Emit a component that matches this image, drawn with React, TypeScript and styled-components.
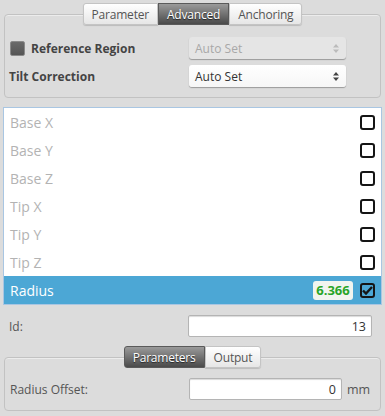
import React from "react";
import styled, { createGlobalStyle, css } from "styled-components";

const Global = createGlobalStyle`
  html, body { margin: 0; padding: 0; background: #dcdcdc; }
  body { font-family: "Open Sans", "Liberation Sans", sans-serif; font-size: 12px; color: #444; }
  * { box-sizing: border-box; }
`;

const Page = styled.div`
  width: 385px;
  height: 416px;
  padding: 3px 4px 0 4px;
  display: flex;
  flex-direction: column;
`;

const Group = styled.fieldset<{ $pb: number }>`
  margin: 0;
  padding: 0 5px ${(p) => p.$pb}px 5px;
  border: 1px solid #c2c2c2;
  border-radius: 4px;
  box-shadow: inset 0 1px 0 #ececec;
  min-width: 0;
`;

const Legend = styled.legend`
  margin: 0 auto;
  padding: 0;
  display: flex;
`;

const Tab = styled.div<{ $active?: boolean }>`
  height: 22px;
  padding: 0 8px;
  display: flex;
  align-items: center;
  font-size: 12px;
  letter-spacing: -0.2px;
  border: 1px solid #c4c4c4;
  ${(p) =>
    p.$active
      ? css`
          background: linear-gradient(#9a9a9a, #4a4a4a);
          color: #fff;
          border-color: #5a5a5a;
          text-shadow: 0 1px 1px #222;
        `
      : css`
          background: linear-gradient(#ffffff, #e6e6e6);
          color: #555;
          box-shadow: 0 1px 1px rgba(0, 0, 0, 0.15);
        `}
  &:first-child { border-radius: 3px 0 0 3px; }
  &:last-child { border-radius: 0 3px 3px 0; }
`;

const FormGrid = styled.div<{ $pt: number }>`
  display: grid;
  grid-template-columns: 1fr 157px;
  row-gap: 6px;
  align-items: center;
  padding: ${(p) => p.$pt}px 29px 0 0;
`;

const Label = styled.div<{ $bold?: boolean; $indent?: number }>`
  display: flex;
  align-items: center;
  gap: 6px;
  color: #444;
  font-size: 12px;
  margin-left: ${(p) => p.$indent ?? 0}px;
  font-weight: ${(p) => (p.$bold ? 700 : 400)};
`;

const DarkCheck = styled.span`
  width: 15px;
  height: 15px;
  border-radius: 2px;
  background: linear-gradient(#6a6a6a, #555);
  border: 1px solid #8a8a8a;
`;

const Select = styled.div<{ $disabled?: boolean }>`
  height: 22px;
  border-radius: 3px;
  padding: 0 7px 0 6px;
  display: flex;
  align-items: center;
  justify-content: space-between;
  font-size: 12px;
  background: ${(p) => (p.$disabled ? "#e5e5e5" : "linear-gradient(#ffffff, #f6f6f6)")};
  color: ${(p) => (p.$disabled ? "#a8a8a8" : "#333")};
  box-shadow: 0 1px 1px rgba(0, 0, 0, 0.3);
`;

const Arrows = ({ color }: { color: string }) => (
  <svg width="6" height="9" viewBox="0 0 6 9">
    <path d="M3 0 L6 3.5 H0 Z M3 9 L6 5.5 H0 Z" fill={color} />
  </svg>
);

const List = styled.div`
  margin: 9px -1px 0 -1px;
  background: #fff;
  border: 1px solid #a9c6e2;
  display: flex;
  flex-direction: column;
`;

const Row = styled.div<{ $selected?: boolean }>`
  height: 28px;
  display: flex;
  align-items: center;
  padding: 0 6px 0 6px;
  font-size: 14px;
  color: ${(p) => (p.$selected ? "#fff" : "#b3b3b3")};
  background: ${(p) => (p.$selected ? "#4ca7d5" : "#fff")};
`;

const RowName = styled.span`
  flex: 1;
`;

const Badge = styled.span`
  height: 19px;
  width: 40px;
  margin-right: 7px;
  display: flex;
  align-items: center;
  justify-content: center;
  border-radius: 3px;
  background: #f1f4ef;
  color: #28a428;
  font-weight: 700;
  font-size: 13px;
`;

const Box = styled.span`
  width: 15px;
  height: 15px;
  border: 2px solid #151515;
  border-radius: 3px;
  display: flex;
  align-items: center;
  justify-content: center;
`;

const FieldRow = styled.div<{ $mt: number; $cols: string }>`
  display: grid;
  grid-template-columns: ${(p) => p.$cols};
  align-items: center;
  margin-top: ${(p) => p.$mt}px;
`;

const Input = styled.div`
  height: 22px;
  background: #fff;
  border: 1px solid #b4b4b4;
  box-shadow: inset 0 1px 1px rgba(0, 0, 0, 0.15);
  border-radius: 2px;
  display: flex;
  align-items: center;
  justify-content: flex-end;
  padding-right: 5px;
  color: #333;
  font-size: 12.5px;
`;

const Unit = styled.span`
  padding-left: 5px;
  color: #555;
  font-size: 12.5px;
`;

const PlainLabel = styled.div<{ $indent: number }>`
  color: #555;
  font-size: 12px;
  padding-left: ${(p) => p.$indent}px;
`;

const rows = ["Base X", "Base Y", "Base Z", "Tip X", "Tip Y", "Tip Z"];

export default function App() {
  return (
    <>
      <Global />
      <Page>
        <Group $pb={10}>
          <Legend>
            <Tab>Parameter</Tab>
            <Tab $active>Advanced</Tab>
            <Tab>Anchoring</Tab>
          </Legend>
          <FormGrid $pt={12}>
            <Label $bold>
              <DarkCheck />
              Reference Region
            </Label>
            <Select $disabled>
              <span>Auto Set</span>
              <Arrows color="#bbb" />
            </Select>
            <Label $bold $indent={-1}>Tilt Correction</Label>
            <Select>
              <span>Auto Set</span>
              <Arrows color="#444" />
            </Select>
          </FormGrid>
        </Group>
        <List>
          {rows.map((r) => (
            <Row key={r}>
              <RowName>{r}</RowName>
              <Box />
            </Row>
          ))}
          <Row $selected>
            <RowName>Radius</RowName>
            <Badge>6.366</Badge>
            <Box>
              <svg width="11" height="9" viewBox="0 0 11 9">
                <path d="M1 4.5 L4 7.5 L10 1" stroke="#151515" strokeWidth="2.4" fill="none" />
              </svg>
            </Box>
          </Row>
        </List>
        <FieldRow $mt={10} $cols="184px 184px">
          <PlainLabel $indent={5}>Id:</PlainLabel>
          <Input>13</Input>
        </FieldRow>
        <Group $pb={10} style={{ marginTop: 9 }}>
          <Legend>
            <Tab $active>Parameters</Tab>
            <Tab>Output</Tab>
          </Legend>
          <FieldRow $mt={10} $cols="179px 153px auto">
            <PlainLabel $indent={0}>Radius Offset:</PlainLabel>
            <Input>0</Input>
            <Unit>mm</Unit>
          </FieldRow>
        </Group>
      </Page>
    </>
  );
}
